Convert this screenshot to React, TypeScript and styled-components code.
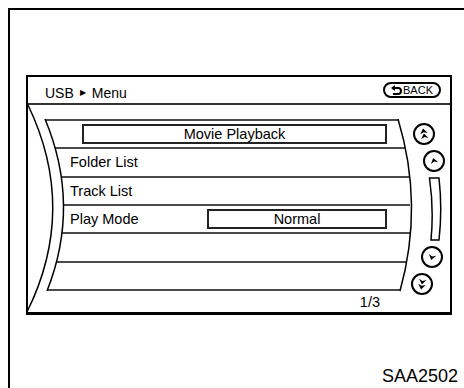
import styled, { createGlobalStyle } from "styled-components"

const GlobalStyle = createGlobalStyle`
  html, body {
    margin: 0;
    padding: 0;
    background: #fff;
    overflow: hidden;
  }
  body {
    font-family: "Liberation Sans", Arial, sans-serif;
    color: #000;
  }
`

const Frame = styled.div`
  box-sizing: border-box;
  margin: 8px 0 0 8px;
  width: calc(100vw - 8px);
  height: calc(100vh - 8px);
  border-top: 2px solid #000;
  border-left: 2px solid #000;
  display: flex;
  flex-direction: column;
`

const Screen = styled.div`
  margin: 65px 0 0 16px;
  width: 426px;
  height: 240px;
  box-sizing: border-box;
  border: 2px solid #000;
  border-bottom-width: 3px;
  display: flex;
  flex-direction: column;
`

const Header = styled.div`
  height: 26px;
  border-bottom: 2px solid #333;
  display: flex;
  align-items: center;
  justify-content: space-between;
  padding: 0 9px 0 17px;
`

const Title = styled.div`
  margin-top: 5px;
  font-size: 14px;
  display: flex;
  align-items: center;

  .sep {
    font-size: 8px;
    margin: 0 6px 0 6px;
  }
`

const BackButton = styled.div`
  box-sizing: border-box;
  width: 58px;
  height: 16px;
  border: 2px solid #000;
  border-radius: 8px;
  display: flex;
  align-items: center;
  justify-content: center;
  gap: 1px;
  font-size: 11px;
  line-height: 1;
`

const Body = styled.div`
  position: relative;
  height: 207px;
  display: grid;
  grid-template-columns: 382px 1fr;
`

const Decoration = styled.svg`
  position: absolute;
  left: 0;
  top: 0;
  width: 422px;
  height: 207px;
  overflow: visible;
  pointer-events: none;
`

const ListColumn = styled.div`
  display: flex;
  flex-direction: column;
  padding-top: 14px;
`

const Rows = styled.div`
  box-sizing: border-box;
  height: 172px;
  border-top: 2px solid #4a4a4a;
  display: flex;
  flex-direction: column;
  clip-path: path("M17 0 Q53 86 19 172 L372 172 Q396 86 370 0 Z");
`

const Row = styled.div`
  flex: 1;
  border-bottom: 2px solid #4a4a4a;
  display: flex;
  align-items: center;
  padding: 0 23px 0 42px;
  font-size: 14.5px;
`

const OptionBox = styled.div<{ $width?: number }>`
  box-sizing: border-box;
  height: 20px;
  border: 2px solid #222;
  text-align: center;
  line-height: 16px;
  ${(p) => (p.$width ? `width: ${p.$width}px; margin-left: auto;` : `flex: 1; margin-left: 12px;`)}
`

const PageCount = styled.div`
  margin-top: 3px;
  padding-right: 30px;
  text-align: right;
  font-size: 14.5px;
  line-height: 16px;
`

const SideColumn = styled.div`
  display: flex;
  flex-direction: column;
  align-items: flex-start;
  gap: 5px;
  padding-top: 18px;
`

const RoundButton = styled.div<{ $shift: number }>`
  box-sizing: border-box;
  width: 22px;
  height: 22px;
  margin-left: ${(p) => p.$shift}px;
  border: 2px solid #000;
  border-radius: 50%;
  display: flex;
  align-items: center;
  justify-content: center;
`

const ScrollTrack = styled.svg`
  margin-left: 18px;
  width: 15px;
  height: 64px;
`

const Caption = styled.div`
  margin: 52px 0 0 372px;
  font-size: 18px;
  line-height: 18px;
`

const Arrow = ({ up, double, tilt }: { up: boolean; double?: boolean; tilt: number }) => {
  const head = (y: number) => `M9 ${y} L12.8 ${y + 5.2} L9 ${y + 3.6} L5.2 ${y + 5.2} Z`
  return (
    <svg width="18" height="18" viewBox="0 0 18 18" style={{ transform: `rotate(${up ? tilt : 180 + tilt}deg)` }}>
      {double ? (
        <>
          <path d={head(3.5)} fill="#000" />
          <path d={head(8.5)} fill="#000" />
        </>
      ) : (
        <path d={head(6)} fill="#000" />
      )}
    </svg>
  )
}

const BackIcon = () => (
  <svg width="11" height="10" viewBox="0 0 11 10">
    <path d="M0 3 L4 0 L4 6 Z" fill="#000" />
    <path d="M3 3 H7 A3 3 0 0 1 7 9 H2" fill="none" stroke="#000" strokeWidth="2" />
  </svg>
)

const rows = [
  { label: "", option: "Movie Playback" },
  { label: "Folder List" },
  { label: "Track List" },
  { label: "Play Mode", value: "Normal" },
  { label: "" },
  { label: "" },
]

export default function App() {
  return (
    <>
      <GlobalStyle />
      <Frame>
        <Screen>
          <Header>
            <Title>
              USB<span className="sep">▶</span>Menu
            </Title>
            <BackButton>
              <BackIcon />
              BACK
            </BackButton>
          </Header>
          <Body>
            <ListColumn>
              <Rows>
                {rows.map((r, i) => (
                  <Row key={i}>
                    {r.option ? <OptionBox>{r.option}</OptionBox> : r.label}
                    {r.value && <OptionBox $width={180}>{r.value}</OptionBox>}
                  </Row>
                ))}
              </Rows>
              <PageCount>1/3</PageCount>
            </ListColumn>
            <SideColumn>
              <RoundButton $shift={3}>
                <Arrow up double tilt={-10} />
              </RoundButton>
              <RoundButton $shift={13}>
                <Arrow up tilt={-15} />
              </RoundButton>
              <ScrollTrack viewBox="0 0 15 64">
                <path d="M1.5 1 H11 Q14.5 32 11 63 H3 Q6 32 1.5 1 Z" fill="none" stroke="#000" strokeWidth="1.5" />
              </ScrollTrack>
              <RoundButton $shift={11}>
                <Arrow up={false} tilt={15} />
              </RoundButton>
              <RoundButton $shift={1}>
                <Arrow up={false} double tilt={10} />
              </RoundButton>
            </SideColumn>
            <Decoration viewBox="0 0 422 207">
              <path d="M0 0 Q50 104 -1 207" fill="none" stroke="#000" strokeWidth="1.5" />
              <path d="M17 14 Q53 100 19 186" fill="none" stroke="#000" strokeWidth="1.5" />
              <path d="M370 14 Q396 100 372 186" fill="none" stroke="#000" strokeWidth="1.5" />
            </Decoration>
          </Body>
        </Screen>
        <Caption>SAA2502</Caption>
      </Frame>
    </>
  )
}
